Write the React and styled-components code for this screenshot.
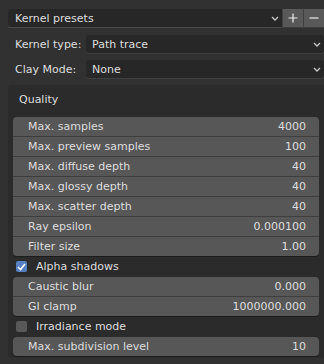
import React from 'react'
import styled, { createGlobalStyle } from 'styled-components'

const colors = {
  bg: '#313131',
  panel: '#2b2b2b',
  field: '#272727',
  number: '#575757',
  divider: '#3e3e3e',
  button: '#595959',
  text: '#dedede',
  check: '#5680c2',
}

const GlobalStyle = createGlobalStyle`
  html, body {
    margin: 0;
    padding: 0;
    background: ${colors.bg};
  }
`

const Root = styled.div`
  width: 324px;
  height: 364px;
  overflow: hidden;
  background: ${colors.bg};
  color: ${colors.text};
  font-family: 'DejaVu Sans', sans-serif;
  font-size: 11px;
  padding-top: 9px;
  box-sizing: border-box;
`

const PresetBar = styled.div`
  display: flex;
  height: 18px;
  margin-left: 8px;
  box-shadow: 0 1px 0 rgba(255, 255, 255, 0.06);
`

const Dropdown = styled.div`
  flex: 1;
  display: flex;
  align-items: center;
  justify-content: space-between;
  height: 18px;
  background: ${colors.field};
  border-radius: ${props => (props.joined ? '3px 0 0 3px' : '3px')};
  padding: 0 3px 0 ${props => props.pad || 7}px;
  box-sizing: border-box;
  box-shadow: 0 1px 0 rgba(255, 255, 255, 0.07);
`

const IconButton = styled.div`
  width: 20px;
  height: 18px;
  display: flex;
  align-items: center;
  justify-content: center;
  background: ${colors.button};
  border-left: 1px solid #3f3f3f;
  &:first-of-type {
    border-left: none;
  }
`

const PropRow = styled.div`
  display: flex;
  align-items: center;
  margin-top: ${props => props.top}px;
  padding-left: 15px;
  padding-right: 0;
`

const Label = styled.div`
  width: 71px;
`

const Panel = styled.div`
  margin: 7px 0 0 8px;
  background: ${colors.panel};
  border-radius: 4px 0 0 4px;
  padding-bottom: 1px;
  height: 272px;
`

const PanelHeader = styled.div`
  height: 28px;
  display: flex;
  align-items: center;
  padding-left: 11px;
  margin-bottom: 4px;
`

const NumberGroup = styled.div`
  margin: 0 5px;
  background: ${colors.number};
  border-radius: 4px;
  overflow: hidden;
  box-shadow: 0 1px 0 rgba(0, 0, 0, 0.35);
`

const NumberRow = styled.div`
  display: flex;
  justify-content: space-between;
  align-items: center;
  height: 19px;
  padding: 0 13px 0 15px;
  border-top: 1px solid ${colors.divider};
  &:first-child {
    border-top: none;
  }
`

const CheckRow = styled.div`
  display: flex;
  align-items: center;
  height: 21px;
  padding-left: 8px;
  gap: 9px;
`

const Box = styled.div`
  width: 11px;
  height: 11px;
  border-radius: 2px;
  background: ${props => (props.checked ? colors.check : '#585858')};
  display: flex;
  align-items: center;
  justify-content: center;
`

const Chevron = () => (
  <svg width="8" height="5" viewBox="0 0 8 5">
    <path d="M1 1 L4 4 L7 1" fill="none" stroke="#c8c8c8" strokeWidth="1.3" />
  </svg>
)

const Plus = () => (
  <svg width="10" height="10" viewBox="0 0 10 10">
    <path d="M5 0.5 V9.5 M0.5 5 H9.5" stroke="#eeeeee" strokeWidth="1.2" />
  </svg>
)

const Minus = () => (
  <svg width="10" height="10" viewBox="0 0 10 10">
    <path d="M0.5 5 H9.5" stroke="#eeeeee" strokeWidth="1.2" />
  </svg>
)

const Tick = () => (
  <svg width="9" height="8" viewBox="0 0 9 8">
    <path d="M1 4 L3.5 6.5 L8 1" fill="none" stroke="#ffffff" strokeWidth="1.6" />
  </svg>
)

const quality = [
  ['Max. samples', '4000'],
  ['Max. preview samples', '100'],
  ['Max. diffuse depth', '40'],
  ['Max. glossy depth', '40'],
  ['Max. scatter depth', '40'],
  ['Ray epsilon', '0.000100'],
  ['Filter size', '1.00'],
]

const caustics = [
  ['Caustic blur', '0.000'],
  ['GI clamp', '1000000.000'],
]

const Numbers = ({ items }) => (
  <NumberGroup>
    {items.map(([label, value]) => (
      <NumberRow key={label}>
        <span>{label}</span>
        <span>{value}</span>
      </NumberRow>
    ))}
  </NumberGroup>
)

const App = () => (
  <Root>
    <GlobalStyle />
    <PresetBar>
      <Dropdown joined>
        <span>Kernel presets</span>
        <Chevron />
      </Dropdown>
      <IconButton><Plus /></IconButton>
      <IconButton><Minus /></IconButton>
    </PresetBar>
    <PropRow top={8}>
      <Label>Kernel type:</Label>
      <Dropdown pad={6}>
        <span>Path trace</span>
        <Chevron />
      </Dropdown>
    </PropRow>
    <PropRow top={7}>
      <Label>Clay Mode:</Label>
      <Dropdown pad={6}>
        <span>None</span>
        <Chevron />
      </Dropdown>
    </PropRow>
    <Panel>
      <PanelHeader>Quality</PanelHeader>
      <Numbers items={quality} />
      <CheckRow>
        <Box checked><Tick /></Box>
        <span>Alpha shadows</span>
      </CheckRow>
      <Numbers items={caustics} />
      <CheckRow>
        <Box />
        <span>Irradiance mode</span>
      </CheckRow>
      <Numbers items={[['Max. subdivision level', '10']]} />
    </Panel>
  </Root>
)

export default App
